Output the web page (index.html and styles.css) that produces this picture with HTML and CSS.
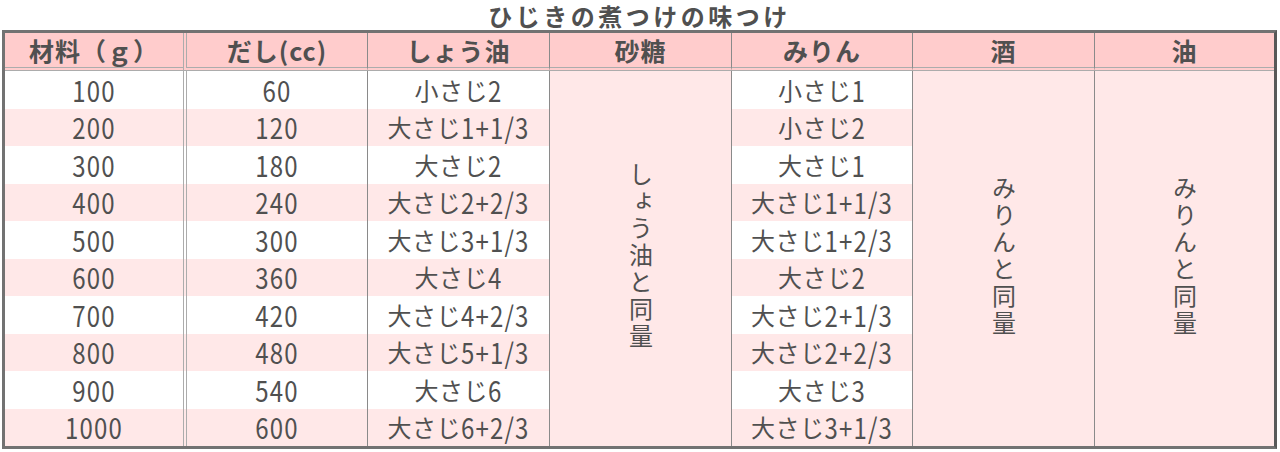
FILE: index.html
```
<!DOCTYPE html>
<html lang="ja">
<head>
<meta charset="utf-8">
<title>ひじきの煮つけの味つけ</title>
<link rel="stylesheet" href="styles.css">
</head>
<body>
<div class="wrap">
  <h1 class="title">ひじきの煮つけの味つけ</h1>
  <table class="tbl">
    <colgroup>
      <col class="c1"><col class="c2"><col class="c3"><col class="c4"><col class="c5"><col class="c6"><col class="c7">
    </colgroup>
    <thead>
      <tr>
        <th>材料（ｇ）</th>
        <th class="dbl">だし(cc)</th>
        <th>しょう油</th>
        <th>砂糖</th>
        <th>みりん</th>
        <th>酒</th>
        <th>油</th>
      </tr>
    </thead>
    <tbody>
      <tr class="w">
        <td><span class="n">100</span></td><td class="dbl"><span class="n">60</span></td><td>小さじ<span class="n">2</span></td>
        <td class="merge" rowspan="10"><span class="vert">しょう油と同量</span></td>
        <td>小さじ<span class="n">1</span></td>
        <td class="merge" rowspan="10"><span class="vert">みりんと同量</span></td>
        <td class="merge" rowspan="10"><span class="vert">みりんと同量</span></td>
      </tr>
      <tr class="p"><td><span class="n">200</span></td><td class="dbl"><span class="n">120</span></td><td>大さじ<span class="n">1+1/3</span></td><td>小さじ<span class="n">2</span></td></tr>
      <tr class="w"><td><span class="n">300</span></td><td class="dbl"><span class="n">180</span></td><td>大さじ<span class="n">2</span></td><td>大さじ<span class="n">1</span></td></tr>
      <tr class="p"><td><span class="n">400</span></td><td class="dbl"><span class="n">240</span></td><td>大さじ<span class="n">2+2/3</span></td><td>大さじ<span class="n">1+1/3</span></td></tr>
      <tr class="w"><td><span class="n">500</span></td><td class="dbl"><span class="n">300</span></td><td>大さじ<span class="n">3+1/3</span></td><td>大さじ<span class="n">1+2/3</span></td></tr>
      <tr class="p"><td><span class="n">600</span></td><td class="dbl"><span class="n">360</span></td><td>大さじ<span class="n">4</span></td><td>大さじ<span class="n">2</span></td></tr>
      <tr class="w"><td><span class="n">700</span></td><td class="dbl"><span class="n">420</span></td><td>大さじ<span class="n">4+2/3</span></td><td>大さじ<span class="n">2+1/3</span></td></tr>
      <tr class="p"><td><span class="n">800</span></td><td class="dbl"><span class="n">480</span></td><td>大さじ<span class="n">5+1/3</span></td><td>大さじ<span class="n">2+2/3</span></td></tr>
      <tr class="w"><td><span class="n">900</span></td><td class="dbl"><span class="n">540</span></td><td>大さじ<span class="n">6</span></td><td>大さじ<span class="n">3</span></td></tr>
      <tr class="p"><td><span class="n">1000</span></td><td class="dbl"><span class="n">600</span></td><td>大さじ<span class="n">6+2/3</span></td><td>大さじ<span class="n">3+1/3</span></td></tr>
    </tbody>
  </table>
</div>
</body>
</html>
```
FILE: styles.css
```
html, body {
  margin: 0;
  padding: 0;
  background: #ffffff;
}
body {
  font-family: "Noto Sans CJK JP", "Noto Sans", sans-serif;
  color: #505050;
}
.wrap {
  padding: 0 0 0 2px;
  width: 1275px;
}
.title {
  margin: 0;
  height: 30px;
  font-size: 24px;
  line-height: 31px;
  font-weight: bold;
  text-align: center;
  letter-spacing: 3.5px;
  color: #505050;
}
.tbl {
  width: 1275px;
  table-layout: fixed;
  border-collapse: separate;
  border-spacing: 0;
  border: 3px solid #727272;
  border-right-color: #585858;
}
.c1 { width: 178px; }
.c2 { width: 184px; }
.c3 { width: 182px; }
.c4 { width: 182px; }
.c5 { width: 181px; }
.c6 { width: 182px; }
.c7 { width: 180px; }
.tbl th, .tbl td {
  box-sizing: border-box;
  padding: 0;
  text-align: center;
  vertical-align: middle;
  border-left: 1px solid #8a8a8a;
}
.tbl th:first-child, .tbl td:first-child {
  border-left: none;
}
.tbl th.dbl, .tbl td.dbl {
  border-left: 4px double #acacac;
}
.tbl th {
  height: 38px;
  background: #ffcccc;
  font-size: 25px;
  line-height: 34px;
  font-weight: bold;
  letter-spacing: 1px;
  border-bottom: 4px double #acacac;
}
.tbl td {
  height: 37.5px;
  font-size: 24px;
  line-height: 28px;
  letter-spacing: 0.5px;
}
.n {
  display: inline-block;
  font-size: 24px;
  line-height: 20px;
  letter-spacing: 1.2px;
  transform: scaleY(1.18);
}
.tbl tr.w td { background: #ffffff; }
.tbl tr.p td { background: #ffe8e8; }
.tbl td.merge,
.tbl tr.w td.merge { background: #ffe8e8; }
.vert {
  display: inline-block;
  writing-mode: vertical-rl;
  font-size: 24px;
  line-height: 24px;
  letter-spacing: 3px;
}
```
